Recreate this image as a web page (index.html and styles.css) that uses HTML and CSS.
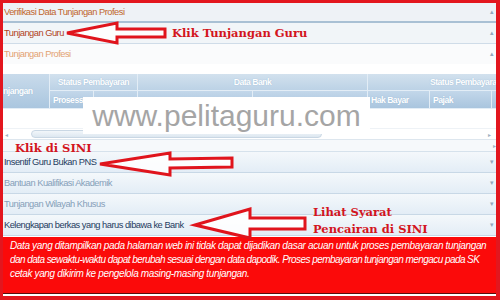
FILE: index.html
```html
<!DOCTYPE html>
<html>
<head>
<meta charset="utf-8">
<link rel="stylesheet" href="styles.css">
</head>
<body>
<div class="frame">
  <div class="acc acc-title"><span>Verifikasi Data Tunjangan Profesi</span><i class="caret">▴</i></div>
  <div class="acc acc-active"><span>Tunjangan Guru</span><i class="caret">▴</i></div>
  <div class="acc acc-sub"><span>Tunjangan Profesi</span><i class="caret">▴</i></div>
  <div class="panel">
    <div class="grid-wrap">
      <div class="thead">
        <div class="th th-first">njangan</div>
        <div class="th g1">Status Pembayaran</div>
        <div class="th g2">Data Bank</div>
        <div class="th g3">Status Pembayaran</div>
        <div class="th sub">Prosess</div>
        <div class="th sub"></div>
        <div class="th sub"></div>
        <div class="th sub"></div>
        <div class="th sub">Hak Bayar</div>
        <div class="th sub">Pajak</div>
        <div class="th sub"></div>
      </div>
      <div class="tbody"></div>
      <div class="hscroll">
        <span class="sarrow">◂</span>
        <span class="track"></span>
        <span class="sarrow right">▸</span>
      </div>
    </div>
    <div class="outer-scroll"><span class="sarrow right">▸</span></div>
  </div>
  <div class="acc row dark"><span>Insentif Guru Bukan PNS</span><i class="caret down">▾</i></div>
  <div class="acc row"><span>Bantuan Kualifikasi Akademik</span><i class="caret down">▾</i></div>
  <div class="acc row"><span>Tunjangan Wilayah Khusus</span><i class="caret down">▾</i></div>
  <div class="acc row dark"><span>Kelengkapan berkas yang harus dibawa ke Bank</span><i class="caret down">▾</i></div>
  <div class="notice">
    <span class="line">Data yang ditampilkan pada halaman web ini tidak dapat dijadikan dasar acuan untuk proses pembayaran tunjangan</span>
    <span class="line tight">dan data sewaktu-waktu dapat berubah sesuai dengan data dapodik. Proses pembayaran tunjangan mengacu pada SK</span>
    <span class="line">cetak yang dikirim ke pengelola masing-masing tunjangan.</span>
  </div>

  <div class="watermark">www.pelitaguru.com</div>

  <svg class="arrows" width="500" height="300" viewBox="0 0 500 300">
    <polygon points="67,33 117,23 117,29 165,29 165,37 117,37 117,43" />
    <polygon points="100,164 170,153 170,159 232,158 232,167 170,168 170,175" />
    <polygon points="195,225 250,209 250,218 305,218 305,229 250,229 250,238" />
  </svg>

  <span class="label l1">Klik Tunjangan Guru</span>
  <span class="label l2">Klik di SINI</span>
  <span class="label l3">Lihat Syarat<br>Pencairan di SINI</span>
</div>
</body>
</html>
```
FILE: styles.css
```css
html, body {
  margin: 0;
  padding: 0;
  background: #ffffff;
}

.frame {
  position: relative;
  width: 500px;
  height: 300px;
  box-sizing: border-box;
  border: 3px solid #e3161e;
  border-right-width: 4px;
  border-bottom-width: 4px;
  overflow: hidden;
  display: flex;
  flex-direction: column;
  background: #ffffff;
  font-family: "Liberation Sans", Arial, sans-serif;
  font-size: 9.3px;
  letter-spacing: -0.5px;
}

.acc {
  display: flex;
  align-items: center;
  justify-content: space-between;
  padding: 0 3px 0 1px;
  height: 20px;
  border-bottom: 1px solid #cfdce8;
  flex: none;
}

.caret {
  font-style: normal;
  font-size: 7px;
  color: #93a8bd;
}

.acc-title {
  height: 18px;
  background: #eef2f6;
  color: #c0652c;
  border-bottom: 2px solid #a9c0d4;
}

.acc-active {
  background: #f1f5f8;
  color: #b0441c;
}

.acc-sub {
  background: #fafbfc;
  color: #e3a273;
  border-bottom: none;
}

.panel {
  flex: none;
  padding-top: 10px;
  background: #ffffff;
}

.grid-wrap {
  overflow: hidden;
}

.thead {
  display: grid;
  grid-template-columns: 47px 44px 44px 115px 115px 62px 62px 74px;
  grid-template-rows: 17px 18px;
  width: 563px;
  color: #ffffff;
  font-weight: bold;
  font-size: 8.6px;
  letter-spacing: -0.5px;
  text-shadow: 0 0 1px #8fb0cf;
}

.th {
  display: flex;
  align-items: center;
  justify-content: flex-start;
  padding-left: 3px;
  border-right: 1px solid #e3edf6;
  border-bottom: 1px solid #e3edf6;
  background: linear-gradient(#d2e1ee, #bcd2e6);
  white-space: nowrap;
  overflow: hidden;
}

.th-first {
  grid-row: 1 / 3;
  padding-left: 0;
  background: linear-gradient(#c9dbeb, #aac6df);
}

.g1 { grid-column: 2 / 4; justify-content: center; padding-left: 0; }
.g2 { grid-column: 4 / 6; justify-content: center; padding-left: 0; }
.g3 { grid-column: 6 / 9; padding-left: 62px; }

.sub {
  background: linear-gradient(#c3d7ea, #a9c5de);
}

.tbody {
  height: 19px;
  border-bottom: 1px solid #eef2f6;
  background: #ffffff;
}

.hscroll {
  display: flex;
  align-items: center;
  height: 10px;
  border-bottom: 1px solid #dde6ee;
  position: relative;
}

.sarrow {
  font-size: 6px;
  color: #9fb1c2;
  width: 28px;
  padding-left: 2px;
  box-sizing: border-box;
}

.sarrow.right {
  width: auto;
  margin-left: auto;
  padding: 0 6px 0 0;
}

.track {
  width: 291px;
  height: 8px;
  box-sizing: border-box;
  border: 1px solid #c9d7e4;
  border-radius: 5px;
  background: linear-gradient(#f2f6fa, #dde7f0);
}

.outer-scroll {
  display: flex;
  align-items: center;
  height: 11px;
  background: #f6f9fb;
  border-bottom: 1px solid #d6e2ec;
}

.outer-scroll .sarrow.right {
  padding-right: 1px;
}

.row {
  background: linear-gradient(#f4f8fb, #e3edf6);
  color: #86a0b9;
  border-bottom: 1px solid #c8d8e6;
}

.row.dark {
  color: #1f3b60;
}

.notice {
  flex: none;
  height: 54px;
  margin-top: 1px;
  padding: 2px 0 0 7px;
  background: #fb0a0a;
  border-bottom: 1px solid #5a0d0d;
  color: #ffffff;
  font-style: italic;
  font-size: 10px;
  letter-spacing: -0.36px;
  line-height: 14px;
  display: flex;
  flex-direction: column;
}

.line {
  white-space: nowrap;
}

.line.tight {
  letter-spacing: -0.56px;
}

.watermark {
  position: absolute;
  left: 80px;
  top: 94px;
  width: 287px;
  height: 37px;
  background: #ffffff;
  color: #a5a5a5;
  font-family: "Liberation Sans", Arial, sans-serif;
  font-size: 30px;
  letter-spacing: 0;
  line-height: 37px;
  text-align: center;
}

.arrows {
  position: absolute;
  left: -3px;
  top: -3px;
}

.arrows polygon {
  fill: #ffffff;
  fill-opacity: 0.85;
  stroke: #e0141c;
  stroke-width: 3;
  stroke-linejoin: miter;
}

.label {
  position: absolute;
  font-family: "DejaVu Serif", "Liberation Serif", serif;
  font-weight: bold;
  font-size: 11.5px;
  letter-spacing: 0;
  line-height: 16.5px;
  color: #d3151d;
  white-space: nowrap;
}

.l1 { left: 169px; top: 22px; }
.l2 { left: 12px; top: 137px; }
.l3 { left: 310px; top: 201px; }
```
